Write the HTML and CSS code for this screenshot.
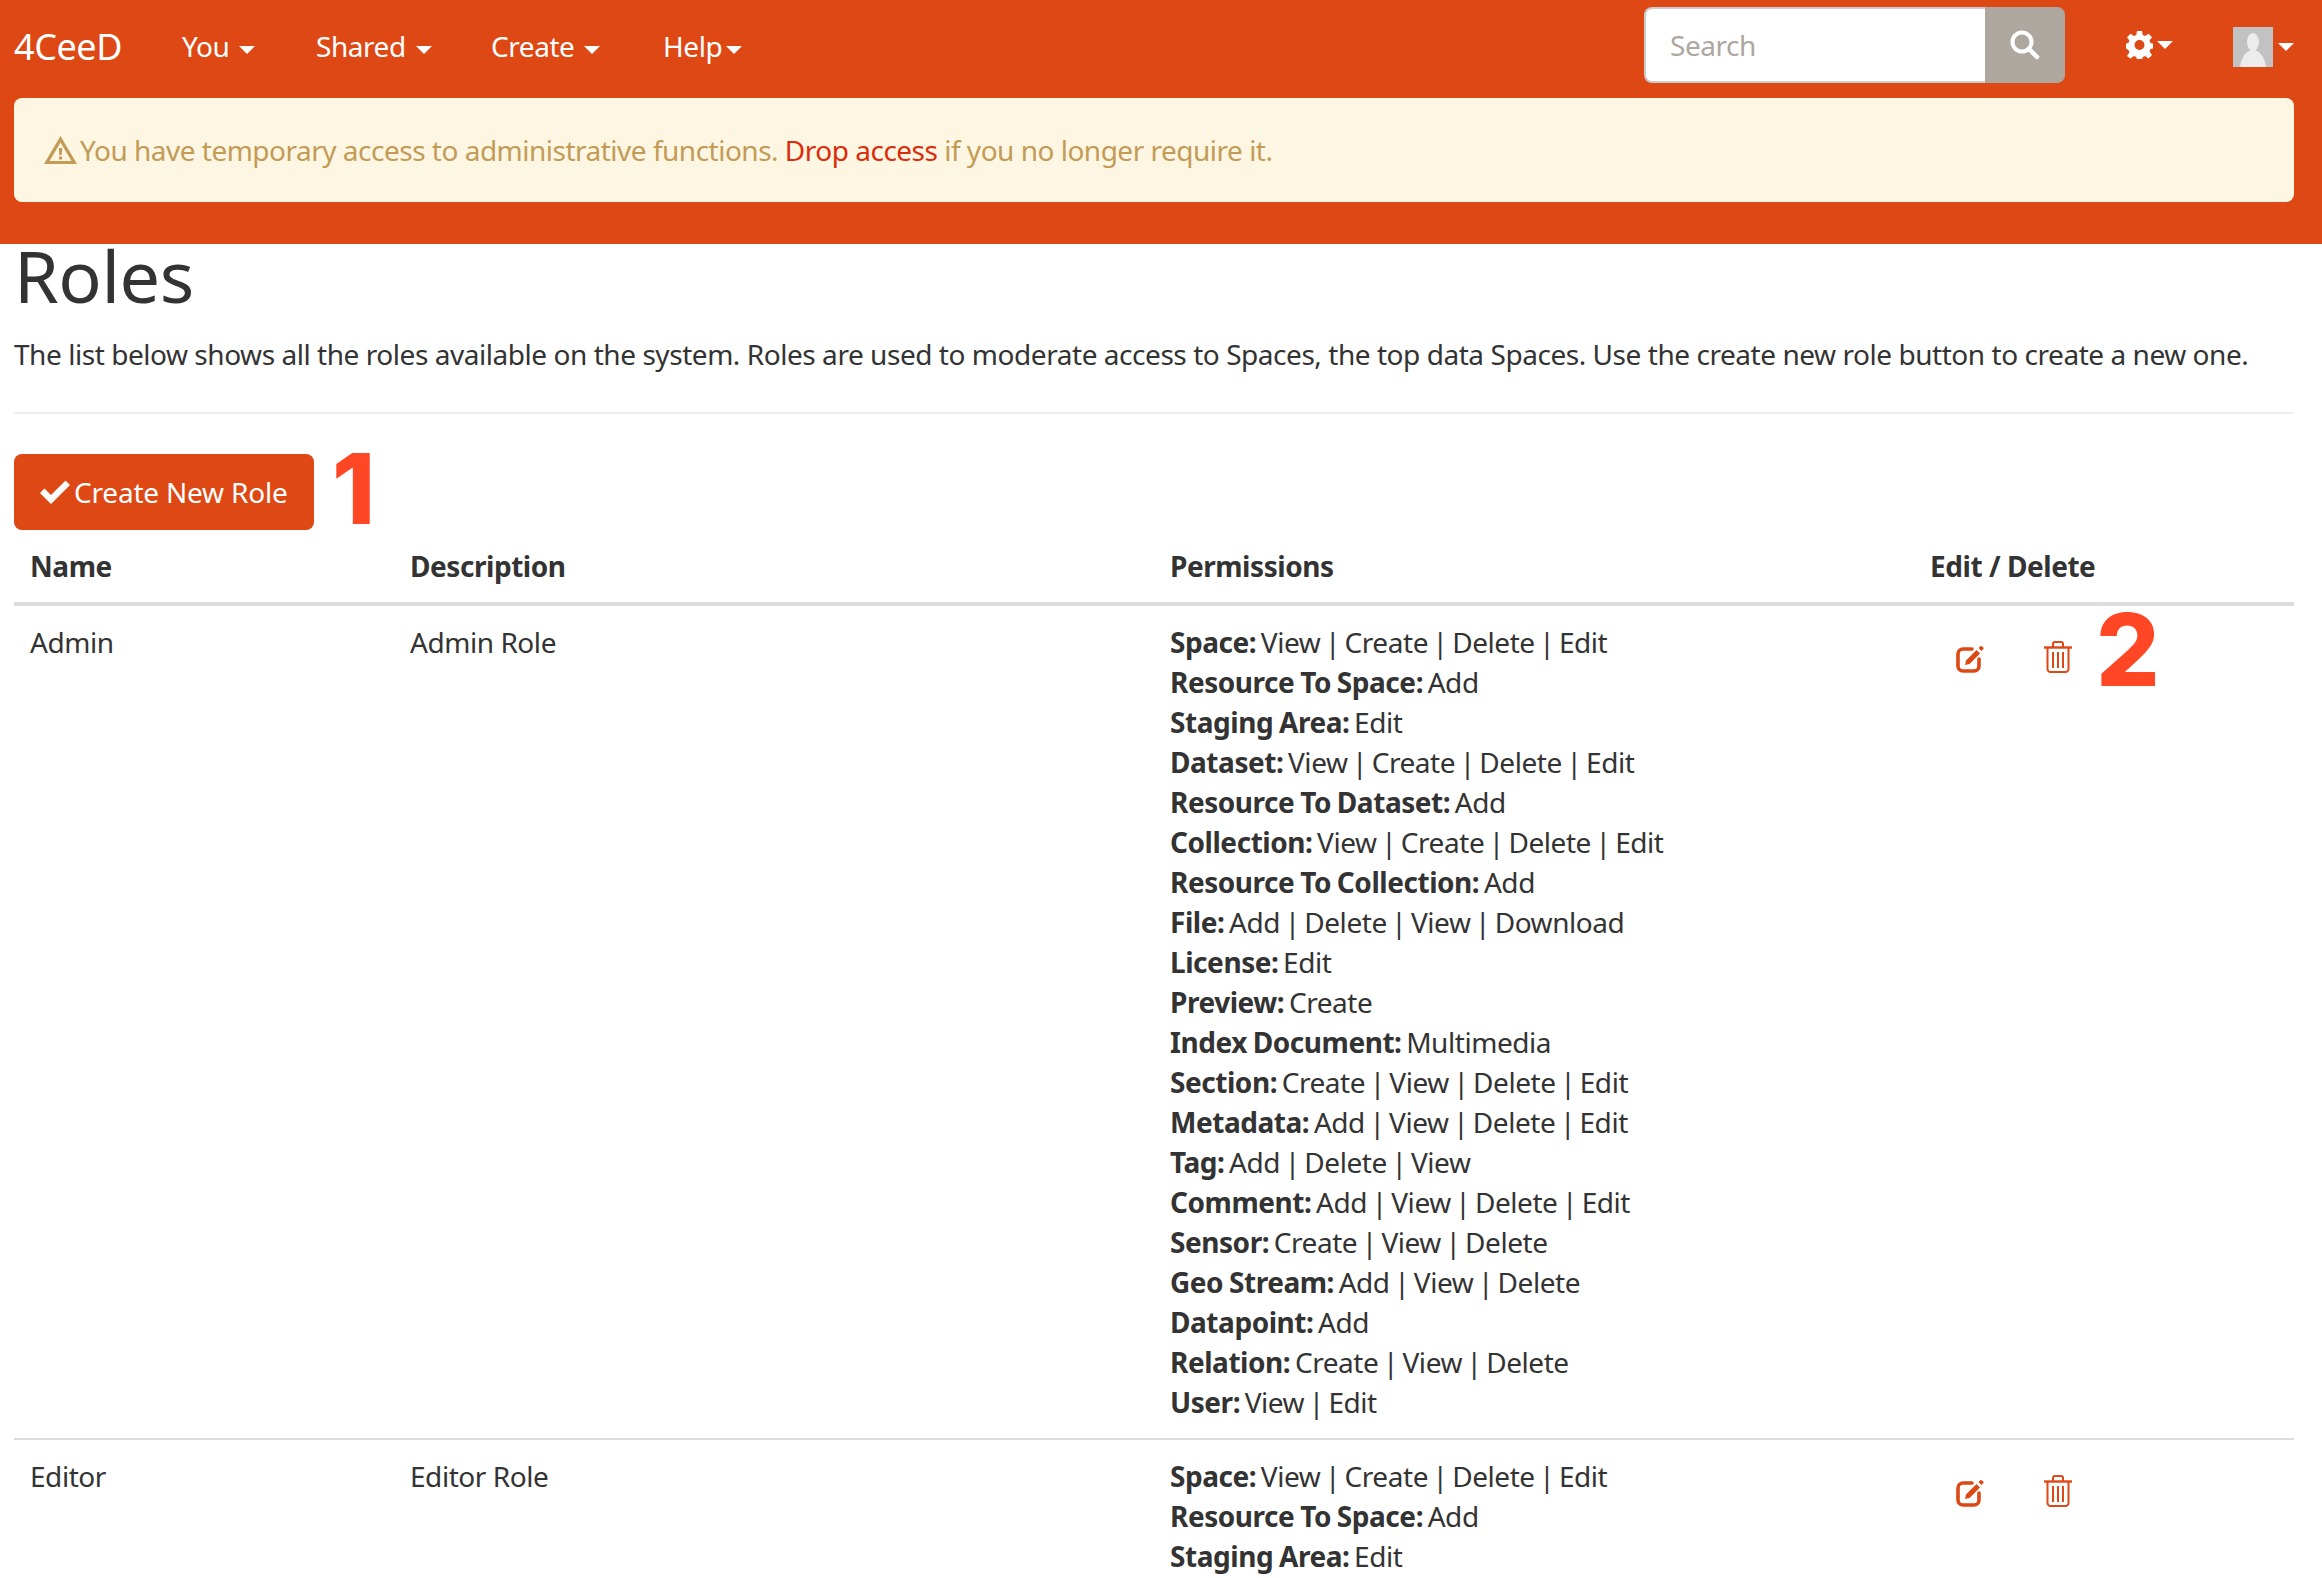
FILE: index.html
```html
<!DOCTYPE html>
<html lang="en">
<head>
	<meta charset="UTF-8">
	<title>Roles</title>
	<link rel="stylesheet" href="styles.css">
</head>
<body>
	<div class="top">
		<div class="navbar">
			<a class="brand" href="#">4CeeD</a>
			<ul class="menu">
				<li class="you"><a href="#">You<span class="caret"></span></a></li>
				<li class="shared"><a href="#">Shared<span class="caret"></span></a></li>
				<li class="create"><a href="#">Create<span class="caret"></span></a></li>
				<li class="help"><a href="#">Help<span class="caret near"></span></a></li>
			</ul>
			<div class="search">
				<div class="searchInput">Search</div>
				<div class="searchBtn">
					<svg width="32" height="32" viewBox="0 0 32 32"><circle cx="13" cy="13" r="9.5" fill="none" stroke="#fff" stroke-width="4"/><path d="M20 20l8 8" stroke="#fff" stroke-width="4.5" stroke-linecap="round"/></svg>
				</div>
			</div>
			<a class="gear" href="#">
				<svg width="27" height="28" viewBox="0 0 27 28"><path fill="#fff" fill-rule="evenodd" d="M11 0h5l.7 4 2.4 1 3.4-2.300 3.500 3.500L23.500 9.500l1 2.400 2.500.6v5l-2.500.6-1 2.400 2.500 3.400-3.500 3.500-3.400-2.300-2.400 1-.7 2.900h-5l-.7-2.900-2.400-1-3.400 2.300L.9 24.900l2.500-3.400-1-2.400L0 17.500v-5l2.400-.6 1-2.400L1 6.200l3.500-3.500 3.400 2.300 2.400-1zM13.500 9a5 5 0 1 0 0 10 5 5 0 0 0 0-10z"/></svg>
				<span class="caret near"></span>
			</a>
			<a class="user" href="#">
				<svg class="avatar" width="40" height="40" viewBox="0 0 40 40"><rect width="40" height="40" fill="#c2c2c2"/><ellipse cx="20" cy="15" rx="6" ry="9" fill="#ececec"/><path d="M7 40c1-10 7-17 13-17s12 7 13 17z" fill="#ececec"/></svg>
				<span class="caret near"></span>
			</a>
		</div>
		<div class="alert">
			<svg width="33" height="28" viewBox="0 0 33 28"><path fill="#c39b56" fill-rule="evenodd" d="M16.500 0L33 28H0zM16.500 6.500L5.500 25h22z"/><path fill="#c39b56" d="M14.800 12h3.400l-.5 7h-2.400zM14.900 20.500h3.200v3h-3.200z"/></svg>
			<span>You have temporary access to administrative functions. <a href="#">Drop access</a> if you no longer require it.</span>
		</div>
	</div>

	<div class="content">
		<h1>Roles</h1>
		<p class="intro">The list below shows all the roles available on the system. Roles are used to moderate access to Spaces, the top data Spaces. Use the create new role button to create a new one.</p>
		<hr>
		<div class="actions">
			<a class="btn" href="#">
				<svg width="30" height="26" viewBox="0 0 30 26"><path fill="#fff" d="M0 14l4.500-4.500 6.500 6.500L25.500 1.500 30 6 11 25z"/></svg>
				Create New Role
			</a>
			<span class="mark one">1</span>
		</div>
		<table class="roles">
			<thead>
				<tr>
					<th class="c1">Name</th>
					<th class="c2">Description</th>
					<th class="c3">Permissions</th>
					<th class="c4">Edit / Delete</th>
				</tr>
			</thead>
			<tbody>
				<tr>
					<td>Admin</td>
					<td>Admin Role</td>
					<td class="perms">
						<b>Space:</b> View | Create | Delete | Edit<br>
						<b>Resource To Space:</b> Add<br>
						<b>Staging Area:</b> Edit<br>
						<b>Dataset:</b> View | Create | Delete | Edit<br>
						<b>Resource To Dataset:</b> Add<br>
						<b>Collection:</b> View | Create | Delete | Edit<br>
						<b>Resource To Collection:</b> Add<br>
						<b>File:</b> Add | Delete | View | Download<br>
						<b>License:</b> Edit<br>
						<b>Preview:</b> Create<br>
						<b>Index Document:</b> Multimedia<br>
						<b>Section:</b> Create | View | Delete | Edit<br>
						<b>Metadata:</b> Add | View | Delete | Edit<br>
						<b>Tag:</b> Add | Delete | View<br>
						<b>Comment:</b> Add | View | Delete | Edit<br>
						<b>Sensor:</b> Create | View | Delete<br>
						<b>Geo Stream:</b> Add | View | Delete<br>
						<b>Datapoint:</b> Add<br>
						<b>Relation:</b> Create | View | Delete<br>
						<b>User:</b> View | Edit
					</td>
					<td class="tools">
						<div class="toolRow">
							<svg class="edit" width="28" height="28" viewBox="0 0 28 28"><path fill="none" stroke="#dd4814" stroke-width="3.600" stroke-linecap="round" d="M16 4H7a5 5 0 0 0-5 5v12a5 5 0 0 0 5 5h11a5 5 0 0 0 5-5v-7"/><path fill="#dd4814" d="M10 15.500L20.500 5l3.500 3.500L13.500 19l-4.500 1zM22.500 3l1.500-1.500a1.500 1.500 0 0 1 2.200 0l.8.8a1.500 1.500 0 0 1 0 2.200L25.500 6z"/></svg>
							<svg class="trash" width="28" height="32" viewBox="0 0 28 32"><path fill="none" stroke="#dd4814" stroke-width="2" d="M9 6V3a2 2 0 0 1 2-2h6a2 2 0 0 1 2 2v3"/><path stroke="#dd4814" stroke-width="2.400" d="M0 6.500h28"/><path fill="none" stroke="#dd4814" stroke-width="2" d="M3.500 7v21a3 3 0 0 0 3 3h15a3 3 0 0 0 3-3V7M9 11v16M14 11v16M19 11v16"/></svg>
						</div>
						<span class="mark two">2</span>
					</td>
				</tr>
				<tr>
					<td>Editor</td>
					<td>Editor Role</td>
					<td class="perms">
						<b>Space:</b> View | Create | Delete | Edit<br>
						<b>Resource To Space:</b> Add<br>
						<b>Staging Area:</b> Edit
					</td>
					<td class="tools">
						<div class="toolRow">
							<svg class="edit" width="28" height="28" viewBox="0 0 28 28"><path fill="none" stroke="#dd4814" stroke-width="3.600" stroke-linecap="round" d="M16 4H7a5 5 0 0 0-5 5v12a5 5 0 0 0 5 5h11a5 5 0 0 0 5-5v-7"/><path fill="#dd4814" d="M10 15.500L20.500 5l3.500 3.500L13.500 19l-4.500 1zM22.500 3l1.500-1.500a1.500 1.500 0 0 1 2.200 0l.8.8a1.500 1.500 0 0 1 0 2.200L25.500 6z"/></svg>
							<svg class="trash" width="28" height="32" viewBox="0 0 28 32"><path fill="none" stroke="#dd4814" stroke-width="2" d="M9 6V3a2 2 0 0 1 2-2h6a2 2 0 0 1 2 2v3"/><path stroke="#dd4814" stroke-width="2.400" d="M0 6.500h28"/><path fill="none" stroke="#dd4814" stroke-width="2" d="M3.500 7v21a3 3 0 0 0 3 3h15a3 3 0 0 0 3-3V7M9 11v16M14 11v16M19 11v16"/></svg>
						</div>
					</td>
				</tr>
			</tbody>
		</table>
	</div>
</body>
</html>
```

FILE: styles.css
```css
*{margin: 0;padding: 0;box-sizing: border-box;}
html,body{height: 100%;overflow: hidden;}
body{
	background-color: #fff;
	color: #333;
	font-family: "Noto Sans", "Open Sans", sans-serif;
	font-size: 28px;
	line-height: 40px;
	letter-spacing: -0.45px;
}
a{text-decoration: none;color: inherit;}
ul,li{list-style: none;}

.top{
	height: 244px;
	background-color: #dd4814;
	padding: 0 28px 0 14px;
}
.navbar{
	height: 98px;
	display: flex;
	align-items: center;
	color: #fff;
}
.brand{
	font-size: 36px;
	width: 168px;
	margin-top: -4px;
}
.menu{
	display: flex;
	flex: 1;
	margin-top: -6px;
}
.menu .you{width: 134px;}
.menu .shared{width: 175px;}
.menu .create{width: 172px;}
.caret{
	display: inline-block;
	width: 0;
	height: 0;
	margin-left: 10px;
	vertical-align: middle;
	border-top: 8px solid #fff;
	border-left: 8px solid transparent;
	border-right: 8px solid transparent;
}
.caret.near{margin-left: 4px;}
.search{
	display: flex;
	width: 421px;
	height: 76px;
	margin-top: -8px;
}
.searchInput{
	width: 341px;
	background-color: #fff;
	color: #aea79f;
	border: 2px solid #ccc;
	border-right: 0;
	border-radius: 8px 0 0 8px;
	padding: 16px 24px;
}
.searchBtn{
	flex: 1;
	background-color: #aea79f;
	border-radius: 0 8px 8px 0;
	padding: 22px 24px 0;
}
.gear{
	display: flex;
	align-items: center;
	margin-left: 61px;
	margin-top: -8px;
}
.user{
	display: flex;
	align-items: center;
	margin-left: 60px;
	margin-top: -4px;
}
.avatar{margin-right: 1px;}

.alert{
	height: 104px;
	background-color: #fcf6e2;
	border-radius: 8px;
	padding: 0 30px;
	display: flex;
	align-items: center;
	gap: 3px;
	color: #c39b56;
	letter-spacing: -0.5px;
}
.alert a{color: #dd2c0b;}

.content{padding: 0 28px 0 14px;}
h1{
	font-size: 72px;
	font-weight: 400;
	line-height: 62px;
	height: 66px;
}
.intro{margin-top: 24px;}
hr{
	border: 0;
	border-top: 2px solid #eee;
	margin-top: 38px;
}
.actions{
	position: relative;
	margin-top: 40px;
	height: 76px;
}
.btn{
	display: inline-flex;
	align-items: center;
	gap: 4px;
	width: 300px;
	height: 76px;
	padding-left: 26px;
	background-color: #dd4814;
	color: #fff;
	border-radius: 8px;
	letter-spacing: -0.2px;
}
.mark{
	position: absolute;
	color: #ff4726;
	font-family: "Inter", "Liberation Sans", sans-serif;
	font-weight: 800;
	line-height: 1;
	letter-spacing: 0;
}
.mark.one{
	left: 318px;
	top: -14px;
	font-size: 98px;
}
.mark.two{
	left: 182px;
	top: -6px;
	font-size: 100px;
}

.roles{
	width: 2280px;
	border-collapse: collapse;
	table-layout: fixed;
}
.c1{width: 380px;}
.c2{width: 760px;}
.c3{width: 760px;}
.c4{width: 380px;}
th{
	text-align: left;
	padding: 16px;
	border-bottom: 4px solid #ddd;
}
td{
	vertical-align: top;
	padding: 16px;
	border-top: 2px solid #ddd;
}
tbody tr:first-child td{border-top: 0;}
.perms{word-spacing: -2.2px;}
.perms b{word-spacing: -1px;}
.tools{position: relative;}
.toolRow{
	display: flex;
	align-items: flex-end;
	gap: 60px;
	padding: 19px 0 0 26px;
}
```
